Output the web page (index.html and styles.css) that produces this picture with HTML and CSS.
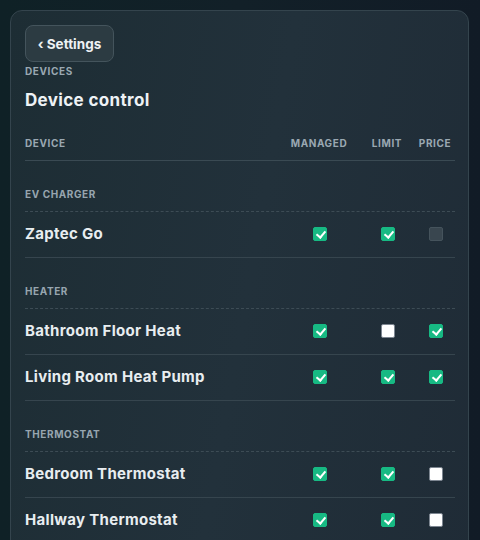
FILE: index.html
```html
<!DOCTYPE html>
<html lang="en">
<head>
<meta charset="utf-8">
<title>Device control</title>
<link rel="stylesheet" href="styles.css">
</head>
<body>
<div class="card">
  <button class="back">‹ Settings</button>
  <div class="eyebrow">DEVICES</div>
  <h1 class="title">Device control</h1>
  <div class="table">
    <div class="row head">
      <div class="c name">DEVICE</div>
      <div class="c">MANAGED</div>
      <div class="c">LIMIT</div>
      <div class="c">PRICE</div>
    </div>

    <div class="group">EV CHARGER</div>
    <div class="row">
      <div class="c name">Zaptec Go</div>
      <div class="c"><span class="cb on"></span></div>
      <div class="c"><span class="cb on"></span></div>
      <div class="c"><span class="cb dis"></span></div>
    </div>

    <div class="group">HEATER</div>
    <div class="row">
      <div class="c name">Bathroom Floor Heat</div>
      <div class="c"><span class="cb on"></span></div>
      <div class="c"><span class="cb"></span></div>
      <div class="c"><span class="cb on"></span></div>
    </div>
    <div class="row">
      <div class="c name">Living Room Heat Pump</div>
      <div class="c"><span class="cb on"></span></div>
      <div class="c"><span class="cb on"></span></div>
      <div class="c"><span class="cb on"></span></div>
    </div>

    <div class="group">THERMOSTAT</div>
    <div class="row">
      <div class="c name">Bedroom Thermostat</div>
      <div class="c"><span class="cb on"></span></div>
      <div class="c"><span class="cb on"></span></div>
      <div class="c"><span class="cb"></span></div>
    </div>
    <div class="row">
      <div class="c name">Hallway Thermostat</div>
      <div class="c"><span class="cb on"></span></div>
      <div class="c"><span class="cb on"></span></div>
      <div class="c"><span class="cb"></span></div>
    </div>
  </div>
</div>
</body>
</html>
```
FILE: styles.css
```css
html, body {
  margin: 0;
  height: 100%;
}
body {
  background: linear-gradient(90deg, #0f2126 0%, #122028 50%, #111b26 100%);
  font-family: "Inter", "Liberation Sans", sans-serif;
  color: #e6ebef;
  padding: 10px 11px 0 10px;
  box-sizing: border-box;
  overflow: hidden;
}
.card {
  border: 1px solid #34444d;
  border-radius: 12px;
  background: linear-gradient(100deg, #1d2d34 0%, #22313b 50%, #1f2b36 100%);
  padding: 14px 13px 40px 14px;
  min-height: 600px;
}
.back {
  display: block;
  height: 37px;
  width: 89px;
  border: 1px solid #44545c;
  border-radius: 8px;
  background: #2c3b42;
  color: #eef2f4;
  font-family: inherit;
  font-weight: 700;
  font-size: 13.5px;
  padding: 0;
}
.eyebrow {
  margin-top: 3px;
  font-size: 10px;
  line-height: 13px;
  font-weight: 700;
  letter-spacing: 0.06em;
  color: #9aa8b2;
}
.title {
  margin: 11px 0 0;
  font-size: 17px;
  line-height: 22px;
  font-weight: 700;
  letter-spacing: 0.02em;
  color: #eef2f5;
}
.table {
  margin-top: 14px;
}
.row {
  display: grid;
  grid-template-columns: 1fr 80px 56px 40px;
  align-items: center;
  height: 43px;
  padding-bottom: 2px;
  border-bottom: 1px solid #36454e;
}
.row.head {
  height: 36px;
  padding-top: 1px;
  padding-bottom: 0;
  box-sizing: border-box;
  border-bottom-color: #3a4a53;
}
.head .c {
  font-size: 10px;
  font-weight: 700;
  letter-spacing: 0.06em;
  color: #9aa8b2;
}
.c {
  text-align: center;
  display: flex;
  justify-content: center;
  align-items: center;
}
.c.name {
  justify-content: flex-start;
  text-align: left;
  font-size: 15px;
  font-weight: 700;
  letter-spacing: 0.02em;
  color: #e8edf0;
}
.head .c.name {
  font-size: 10px;
  letter-spacing: 0.06em;
  color: #9aa8b2;
}
.group {
  padding: 27px 0 10px;
  line-height: 13px;
  font-size: 10px;
  font-weight: 700;
  letter-spacing: 0.06em;
  color: #97a5af;
  border-bottom: 1px dashed #3d4c55;
}
.cb {
  width: 14px;
  height: 14px;
  box-sizing: border-box;
  border-radius: 2px;
  background: #ffffff;
  border: 1px solid #7d8691;
  position: relative;
  margin-left: 2px;
}
.cb.on {
  background: #17b983;
  border-color: #17b983;
}
.cb.on::after {
  content: "";
  position: absolute;
  left: 4px;
  top: 1px;
  width: 4px;
  height: 7px;
  border: solid #ffffff;
  border-width: 0 2px 2px 0;
  transform: rotate(40deg);
}
.cb.dis {
  background: #39464f;
  border-color: #45535c;
}
```
